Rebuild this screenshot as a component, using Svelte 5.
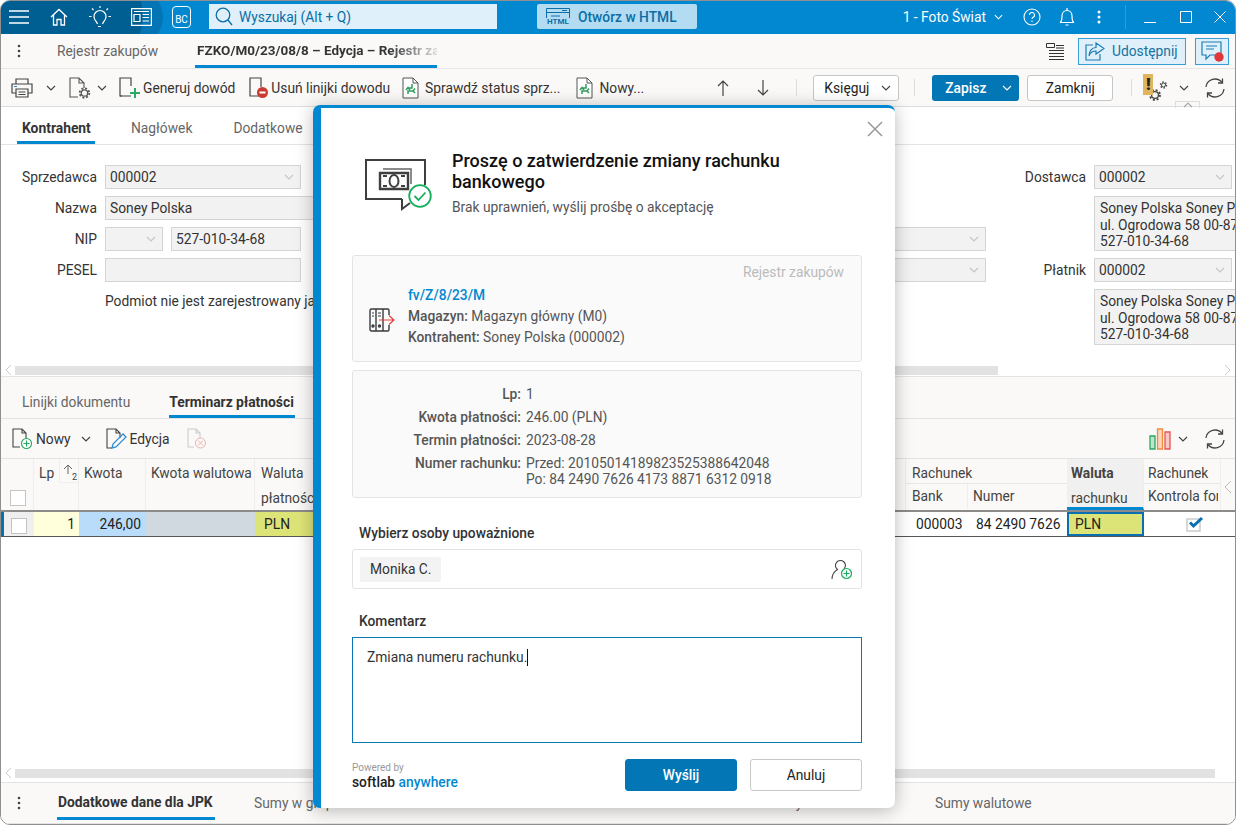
<script>
    const footTabs = ["Sumy w grupach VAT", "Rozliczenia", "Dane dodatkowe", "Koszty dodatkowe"];
    const payment = [
        { key: "Lp:", value: "1" },
        { key: "Kwota płatności:", value: "246.00 (PLN)" },
        { key: "Termin płatności:", value: "2023-08-28" },
        { key: "Numer rachunku:", value: "Przed: 20105014189823525388642048\nPo: 84 2490 7626 4173 8871 6312 0918" }
    ];
</script>

{#snippet chevron(cls = "")}
    <svg class="chev {cls}" viewBox="0 0 10 6" width="10" height="6"><path d="M1 1l4 4 4-4" fill="none" stroke="currentColor" stroke-width="1.2" /></svg>
{/snippet}

{#snippet refresh()}
    <svg width="22" height="22" viewBox="0 0 22 22" fill="none" stroke="#444" stroke-width="1.3">
        <path d="M2 10a9 9 0 0 1 16-4.500M20 12a9 9 0 0 1-16 4.500" />
        <path d="M18.500 1.500v4.500H14M3.500 20.500V16H8" />
    </svg>
{/snippet}

{#snippet docArrows()}
    <svg width="17" height="22" viewBox="0 0 17 22" fill="none">
        <path d="M1 1h10l5 5v15H1z" fill="#fff" stroke="#555" />
        <path d="M11 1v5h5" stroke="#555" />
        <path d="M10 7v4H6M4 13l2-2.500 2 2.500" stroke="#2e9e5b" stroke-width="1.500" />
        <path d="M6 17v-3h5M13 11.500l-2 2.500 2 2" stroke="#2e9e5b" stroke-width="1.500" />
    </svg>
{/snippet}

<div class="window">
    <header class="titlebar">
        <button class="tb-icon burger" aria-label="Menu">
            <svg width="20" height="14" viewBox="0 0 20 14" stroke="#fff" stroke-width="1.400"><path d="M0 1h20M0 7h20M0 13h20" /></svg>
        </button>
        <svg class="tb-home" width="18" height="18" viewBox="0 0 18 18" fill="none" stroke="#fff" stroke-width="1.300"><path d="M1 9l8-7.500L17 9M3.500 7v10H7v-5.500h4V17h3.500V7" /></svg>
        <svg class="tb-bulb" width="22" height="24" viewBox="0 0 22 24" fill="none" stroke="#fff" stroke-width="1.200">
            <path d="M8.500 19c-1-3-3.500-3.500-3.500-7.500a6 6 0 0 1 12 0c0 4-2.500 4.500-3.500 7.500M9 21.500h3" />
            <path d="M11 1v2M3 3.500l1.500 1.500M19 3.500L17.500 5M0 11.500h2.500M19.500 11.500H22" />
        </svg>
        <svg class="tb-news" width="21" height="18" viewBox="0 0 21 18" fill="none" stroke="#fff" stroke-width="1.200">
            <path d="M.6.6h19.800v16.800H.6z" /><path d="M3 3.500h15M3 6.500h6v7H3zM11.500 6.500H18M11.500 9.500H18M11.500 13H18" />
        </svg>
        <div class="bc">BC</div>
        <div class="search">
            <svg width="18" height="19" viewBox="0 0 18 19" fill="none" stroke="#0b6ea6" stroke-width="1.300"><circle cx="8" cy="8" r="6.800" /><path d="M13 13l4 5" /></svg>
            <span>Wyszukaj (Alt + Q)</span>
        </div>
        <button class="html-btn">
            <span class="html-ico">
                <svg width="24" height="13" viewBox="0 0 24 13" fill="none" stroke="#0b6ea6"><path d="M.5 12V.5h23V12M.5 4.500h23M16 2.500h5M5 8h9" /></svg>
                <b>HTML</b>
            </span>
            Otwórz w HTML
        </button>
        <div class="tb-right">
            <span class="company">1 - Foto Świat</span>
            {@render chevron("white company-chev")}
            <svg class="help" width="18" height="18" viewBox="0 0 18 18" fill="none" stroke="#fff" stroke-width="1.100"><circle cx="9" cy="9" r="8" /><path d="M6.500 7a2.500 2.500 0 1 1 3.500 2.300c-.7.400-1 .8-1 1.700M9 12.500v1.500" /></svg>
            <svg class="bell" width="16" height="20" viewBox="0 0 16 20" fill="none" stroke="#fff" stroke-width="1.200"><path d="M1 15.500c2-1 2-3 2-6.500 0-3 2-5.500 5-5.500s5 2.500 5 5.500c0 3.500 0 5.500 2 6.500zM8 1v2.500M6.500 18h3" /></svg>
            <svg class="dots" width="4" height="14" viewBox="0 0 4 14" fill="#fff"><circle cx="2" cy="2" r="1.500" /><circle cx="2" cy="7" r="1.500" /><circle cx="2" cy="12" r="1.500" /></svg>
            <span class="tb-sep"></span>
            <svg class="win w-min" width="12" height="12" viewBox="0 0 12 12" stroke="#fff"><path d="M0 11.500h12" /></svg>
            <svg class="win w-max" width="12" height="12" viewBox="0 0 12 12" fill="none" stroke="#fff"><path d="M.5.500h11v11H.5z" /></svg>
            <svg class="win w-close" width="12" height="12" viewBox="0 0 12 12" stroke="#fff"><path d="M.5.500l11 11M11.500.500l-11 11" /></svg>
        </div>
    </header>

    <nav class="tabsbar">
        <svg class="vdots" width="4" height="14" viewBox="0 0 4 14" fill="#444"><circle cx="2" cy="2" r="1.300" /><circle cx="2" cy="7" r="1.300" /><circle cx="2" cy="12" r="1.300" /></svg>
        <span class="tab-plain">Rejestr zakupów</span>
        <span class="tab-active">FZKO/M0/23/08/8 – Edycja – Rejestr zakupów</span>
        <div class="tabs-right">
            <svg width="19" height="17" viewBox="0 0 19 17" fill="none" stroke="#333"><path d="M.5.500h8v4h-8zM3 7.500h15M3 10.500h15M3 13.500h15M3 16.500h15M10 2.500h8M10 5h8" /></svg>
            <button class="share">
                <svg width="20" height="19" viewBox="0 0 20 19" fill="none" stroke="#1a7db5" stroke-width="1.200"><path d="M8 3H1v15h14v-6" /><path d="M11 1l8 5.500-8 5.500V9C7 9 5 11 4 14c0-5 3-8.500 7-8.500z" /></svg>
                Udostępnij
            </button>
            <button class="chat" aria-label="Komunikaty">
                <svg width="24" height="22" viewBox="0 0 24 22"><path d="M1 1h19v13H9l-4 4v-4H1z" fill="none" stroke="#1a7db5" stroke-width="1.200" /><path d="M5 5h11M5 8h8" stroke="#1a7db5" /><circle cx="18" cy="16" r="4.700" fill="#e0373a" /></svg>
            </button>
        </div>
    </nav>

    <div class="toolbar">
        <svg class="i-print" width="22" height="20" viewBox="0 0 22 20" fill="none" stroke="#444" stroke-width="1.200"><path d="M5 6V1h12v5M5 15H1V6h20v9h-4" /><path d="M5 11h12v8H5zM7.500 14h7M7.500 16.500h7" /><path d="M3 8.500h3" stroke="#1a8fd0" /></svg>
        {@render chevron("c-print")}
        <svg class="i-docgear" width="22" height="22" viewBox="0 0 22 22" fill="none" stroke="#555" stroke-width="1.100"><path d="M9 20H1V1h9l5 5v5M10 1v5h5" /><circle cx="15.500" cy="16" r="3.200" stroke-width="1.300" /><circle cx="15.500" cy="16" r="4.800" stroke-dasharray="2 1.770" stroke-width="1.700" /></svg>
        {@render chevron("c-docgear")}
        <span class="tool gen">
            <svg width="22" height="22" viewBox="0 0 22 22" fill="none"><path d="M12 19H1V1h11v8" stroke="#444" stroke-width="1.200" /><path d="M1 19h2" stroke="#444" /><path d="M16 11v10M11 16h10" stroke="#2ea866" stroke-width="2" /></svg>
            Generuj dowód
        </span>
        <span class="tool del">
            <svg width="20" height="22" viewBox="0 0 20 22" fill="none"><path d="M10 19H1V1h11v9" stroke="#444" stroke-width="1.200" /><circle cx="13.500" cy="15.500" r="5.500" fill="#c93a32" /><path d="M10.500 15.500h6" stroke="#fff" stroke-width="2" /></svg>
            Usuń linijki dowodu
        </span>
        <span class="tool chk">{@render docArrows()} Sprawdź status sprz...</span>
        <span class="tool nowy">{@render docArrows()} Nowy...</span>
        <svg class="arrow a-up" width="12" height="16" viewBox="0 0 12 16" fill="none" stroke="#444" stroke-width="1.200"><path d="M6 16V1M1 6l5-5 5 5" /></svg>
        <svg class="arrow a-down" width="12" height="16" viewBox="0 0 12 16" fill="none" stroke="#444" stroke-width="1.200"><path d="M6 0v15M1 10l5 5 5-5" /></svg>
        <span class="sep s1"></span>
        <div class="ksieguj">Księguj {@render chevron()}</div>
        <span class="sep s2"></span>
        <div class="zapisz"><span>Zapisz</span>{@render chevron("white")}</div>
        <button class="zamknij">Zamknij</button>
        <span class="sep s3"></span>
        <div class="warn-gear">
            <span class="warn">!</span>
            <svg width="20" height="22" viewBox="0 0 20 22" fill="none" stroke="#444"><circle cx="7" cy="15" r="3.400" stroke-width="1.300" /><circle cx="7" cy="15" r="5" stroke-dasharray="2 1.930" stroke-width="1.800" /><circle cx="15.500" cy="5" r="2" /><circle cx="15.500" cy="5" r="3" stroke-dasharray="1.400 1.740" stroke-width="1.500" /></svg>
        </div>
        {@render chevron("c-warn")}
        <span class="tool-refresh">{@render refresh()}</span>
    </div>

    <div class="doc-tabs">
        <span class="dt active">Kontrahent</span>
        <span class="dt n">Nagłówek</span>
        <span class="dt d">Dodatkowe</span>
        <span class="collapse">{@render chevron("up")}</span>
    </div>

    <section class="form">
        <label>Sprzedawca</label>
        <div class="field sel w196">000002 {@render chevron()}</div>
        <label class="lr">Dostawca</label>
        <div class="field sel w138">000002 {@render chevron()}</div>

        <label>Nazwa</label>
        <div class="field span2">Soney Polska</div>
        <div class="addr rows2">Soney Polska Soney Polska<br />ul. Ogrodowa 58 00-876<br />527-010-34-68</div>

        <label>NIP</label>
        <div class="nip">
            <div class="field sel nip-a">{@render chevron()}</div>
            <div class="field nip-b">527-010-34-68</div>
        </div>
        <div class="field sel mid">{@render chevron()}</div>

        <label>PESEL</label>
        <div class="field w196"></div>
        <div class="field sel mid">{@render chevron()}</div>
        <label class="lr">Płatnik</label>
        <div class="field sel w138">000002 {@render chevron()}</div>

        <div class="podmiot">Podmiot nie jest zarejestrowany jako podatnik VAT</div>
        <div class="addr last">Soney Polska Soney Polska<br />ul. Ogrodowa 58 00-876<br />527-010-34-68</div>
    </section>

    <div class="hscroll top">
        <svg class="sa" width="7" height="12" viewBox="0 0 7 12" fill="none" stroke="#ccc"><path d="M6 1L1 6l5 5" /></svg>
        <span class="thumb"></span>
        <svg class="sa" width="7" height="12" viewBox="0 0 7 12" fill="none" stroke="#ccc"><path d="M1 1l5 5-5 5" /></svg>
    </div>

    <div class="sub-tabs">
        <span class="st">Linijki dokumentu</span>
        <span class="st active">Terminarz płatności</span>
    </div>

    <div class="grid-tools">
        <svg width="21" height="22" viewBox="0 0 21 22" fill="none"><path d="M8 19H1V1h9l4 4v6M10 1v4h4" stroke="#444" stroke-width="1.100" /><circle cx="14.500" cy="15.500" r="5" fill="#fff" stroke="#22a85c" stroke-width="1.100" /><path d="M14.500 12.500v6M11.500 15.500h6" stroke="#22a85c" stroke-width="1.100" /></svg>
        <span class="gt-nowy">Nowy</span>
        {@render chevron("c-nowy")}
        <svg class="gt-edit" width="21" height="22" viewBox="0 0 21 22" fill="none"><path d="M6 20H1V1h9l4 4v5M10 1v4h4" stroke="#444" stroke-width="1.100" /><path d="M6 20l1-4L17 6l3 3L10 19z" stroke="#2f8fd0" stroke-width="1.300" /></svg>
        <span class="gt-edit-t">Edycja</span>
        <svg class="gt-x" width="20" height="22" viewBox="0 0 20 22" fill="none"><path d="M7 19H1V1h8l4 4v5M9 1v4h4" stroke="#ccc" stroke-width="1.100" /><circle cx="13.500" cy="15" r="5" stroke="#eeb0ae" /><path d="M11 12.500l5 5M16 12.500l-5 5" stroke="#eeb0ae" /></svg>
        <div class="gt-right">
            <svg width="22" height="22" viewBox="0 0 22 22" fill="none" stroke-width="1.300"><path d="M1 8h5v13H1z" stroke="#28a860" fill="#bfe5cd" /><path d="M8.500 1h5v20h-5z" stroke="#ef8b3e" fill="#f9d6ba" /><path d="M16 4h5v17h-5z" stroke="#e5534f" fill="#f7c8c6" /></svg>
            {@render chevron("c-chart")}
            {@render refresh()}
        </div>
    </div>

    <section class="table">
        <div class="thead">
            <div class="th c-check"><span class="box"></span></div>
            <div class="th c-lp">Lp <span class="sort"><svg width="12" height="10" viewBox="0 0 12 10" fill="none" stroke="#666"><path d="M5 10V1M1 5l4-4 4 4" /></svg><i>2</i></span></div>
            <div class="th c-kw">Kwota</div>
            <div class="th c-kww">Kwota walutowa</div>
            <div class="th c-wal">Waluta<br />płatności</div>
            <div class="th c-mid"></div>
            <div class="th-group">
                <div class="gt">Rachunek</div>
                <div class="gsub"><span class="c-bank">Bank</span><span class="c-num">Numer</span></div>
            </div>
            <div class="th c-wr">Waluta<br /><span>rachunku</span></div>
            <div class="th-group c-kf">
                <div class="gt">Rachunek</div>
                <div class="gsub"><span>Kontrola form</span></div>
            </div>
            <div class="th c-end">
                <svg width="8" height="14" viewBox="0 0 8 14" fill="none" stroke="#bbb"><path d="M7 1L1 7l6 6" /></svg>
            </div>
        </div>
        <div class="trow">
            <div class="td c-check sel"><span class="box"></span></div>
            <div class="td c-lp right lp">1</div>
            <div class="td c-kw right kw">246,00</div>
            <div class="td c-kww gray"></div>
            <div class="td c-wal yellow">PLN</div>
            <div class="td c-mid"></div>
            <div class="td c-bank2">000003</div>
            <div class="td c-num2">84 2490 7626</div>
            <div class="td c-wr yellow focus">PLN</div>
            <div class="td c-kf tick">
                <svg width="18" height="16" viewBox="0 0 18 16" fill="none"><path d="M1 3h13v12H1z" fill="#fff" stroke="#ccc" stroke-width="1.500" /><path d="M4 6.500l3.500 3.500L16 2" stroke="#0a6fb0" stroke-width="3" /></svg>
            </div>
            <div class="td c-end"></div>
        </div>
    </section>

    <div class="hscroll bottom">
        <svg class="sa" width="7" height="12" viewBox="0 0 7 12" fill="none" stroke="#ccc"><path d="M6 1L1 6l5 5" /></svg>
        <span class="thumb"></span>
    </div>

    <footer class="foot-tabs">
        <svg class="vdots" width="4" height="14" viewBox="0 0 4 14" fill="#444"><circle cx="2" cy="2" r="1.300" /><circle cx="2" cy="7" r="1.300" /><circle cx="2" cy="12" r="1.300" /></svg>
        <span class="ft active">Dodatkowe dane dla JPK</span>
        {#each footTabs as t}
            <span class="ft">{t}</span>
        {/each}
        <span class="ft last">Sumy walutowe</span>
    </footer>

    <div class="modal">
        <button class="close" aria-label="Zamknij">
            <svg width="16" height="16" viewBox="0 0 16 16" stroke="#999" stroke-width="1.500"><path d="M1 1l14 14M15 1L1 15" /></svg>
        </button>
        <div class="m-head">
            <svg width="68" height="52" viewBox="0 0 68 52" fill="none">
                <path d="M60 26V1H1v39h36" stroke="#3f3f3f" stroke-width="2" />
                <path d="M37 40v10l8-6" stroke="#3f3f3f" stroke-width="2" />
                <path d="M18 10h28v15" stroke="#666" stroke-width="1.500" />
                <path d="M15 14h28v16H15z" stroke="#3f3f3f" stroke-width="2.400" />
                <ellipse cx="29" cy="22" rx="4.500" ry="6" stroke="#3f3f3f" stroke-width="2" />
                <path d="M18 17h4M36 17h4M18 27h4M36 27h4" stroke="#3f3f3f" stroke-width="2" />
                <circle cx="55" cy="37" r="10.800" fill="#fff" stroke="#17ae5c" stroke-width="1.800" />
                <path d="M49.500 37l4 4 7-7.500" stroke="#17ae5c" stroke-width="1.800" />
            </svg>
            <div class="m-titles">
                <h2>Proszę o zatwierdzenie zmiany rachunku bankowego</h2>
                <p>Brak uprawnień, wyślij prośbę o akceptację</p>
            </div>
        </div>

        <div class="card doc">
            <span class="reg">Rejestr zakupów</span>
            <div class="doc-row">
                <svg width="26" height="24" viewBox="0 0 26 24" fill="none" stroke="#3a3a3a" stroke-width="1.400">
                    <path d="M1 2.500A1.500 1.500 0 0 1 2.500 1H7v22H2.500A1.500 1.500 0 0 1 1 21.500zM7 1h7v22H7M14 1h4.500a1.500 1.500 0 0 1 1.500 1.500V7M20 17v4.500a1.500 1.500 0 0 1-1.500 1.500H14" />
                    <path d="M3 5h2M3 8h2M9 5h3M9 8h3" stroke-width="1.100" />
                    <circle cx="4" cy="18" r="1" /><circle cx="10.500" cy="18" r="1" />
                    <path d="M10 12h15M20 7.500l5 4.500-5 4.500" stroke="#e8403c" stroke-width="1.200" />
                </svg>
                <div class="doc-text">
                    <a href="#doc">fv/Z/8/23/M</a>
                    <div><b>Magazyn:</b> Magazyn główny (M0)</div>
                    <div><b>Kontrahent:</b> Soney Polska (000002)</div>
                </div>
            </div>
        </div>

        <div class="card kv">
            {#each payment as row}
                <b>{row.key}</b>
                <span>{row.value}</span>
            {/each}
        </div>

        <div class="m-label first">Wybierz osoby upoważnione</div>
        <div class="people">
            <span class="chip">Monika C.</span>
            <svg width="22" height="22" viewBox="0 0 22 22" fill="none">
                <path d="M1 21c0-5 3-8 5.500-9.500A5 5 0 1 1 13 11" stroke="#444" stroke-width="1.100" />
                <circle cx="15.500" cy="15.500" r="5" stroke="#17ae5c" stroke-width="1.200" />
                <path d="M15.500 12.500v6M12.500 15.500h6" stroke="#17ae5c" stroke-width="1.200" />
            </svg>
        </div>

        <div class="m-label second">Komentarz</div>
        <div class="comment">Zmiana numeru rachunku.<span class="caret"></span></div>

        <div class="m-foot">
            <div class="brand">
                <small>Powered by</small>
                <div>softlab <em>anywhere</em></div>
            </div>
            <button class="btn primary">Wyślij</button>
            <button class="btn">Anuluj</button>
        </div>
    </div>
</div>

<style>
    :global(body) {
        margin: 0;
        background: #fff;
    }

    .window {
        position: relative;
        width: 1236px;
        height: 825px;
        box-sizing: border-box;
        border: 1px solid #8f8f8f;
        border-radius: 10px;
        overflow: hidden;
        background: #fff;
        display: flex;
        flex-direction: column;
        font-family: Roboto, "Liberation Sans", sans-serif;
        font-size: 13.8px;
        color: #333;
    }

    button {
        font: inherit;
        cursor: pointer;
    }

    svg {
        display: block;
        flex: none;
    }

    .chev {
        color: #444;
    }

    :global(.white) {
        color: #fff !important;
    }

    /* title bar */
    .titlebar {
        position: relative;
        flex: none;
        height: 33px;
        box-sizing: border-box;
        padding-bottom: 2px;
        display: flex;
        align-items: center;
        background: #0288d1;
    }

    .titlebar::before {
        content: "";
        position: absolute;
        left: -60px;
        top: -40px;
        width: 222px;
        height: 112px;
        border-radius: 50%;
        background: #0475b4;
    }

    .titlebar::after {
        content: "";
        position: absolute;
        left: -80px;
        top: -60px;
        width: 222px;
        height: 150px;
        border-radius: 50%;
        background: #005f92;
    }

    .titlebar > * {
        position: relative;
        z-index: 1;
    }

    .burger {
        margin-left: 8px;
        padding: 0;
        border: 0;
        background: none;
    }

    .tb-home {
        margin-left: 21px;
    }

    .tb-bulb {
        margin-left: 21px;
    }

    .tb-news {
        margin-left: 20px;
    }

    .bc {
        margin-left: 20px;
        width: 19px;
        height: 22px;
        border: 1px solid #fff;
        border-radius: 4px;
        box-sizing: border-box;
        color: #fff;
        font-size: 10px;
        display: flex;
        align-items: flex-end;
        justify-content: center;
        padding-bottom: 2px;
    }

    .search {
        margin-left: 18px;
        width: 288px;
        height: 25px;
        box-sizing: border-box;
        padding-left: 6px;
        background: #dff0fa;
        color: #0b6ea6;
        display: flex;
        align-items: center;
        gap: 6px;
    }

    .html-btn {
        margin-left: 40px;
        width: 160px;
        height: 25px;
        border: 0;
        border-radius: 2px;
        padding: 0 0 0 9px;
        background: #b3dcf3;
        color: #0b6ea6;
        font-weight: 500;
        display: flex;
        align-items: center;
        gap: 8px;
    }

    .html-ico {
        display: flex;
        flex-direction: column;
        align-items: center;
        width: 24px;
    }

    .html-ico b {
        font-size: 8px;
        line-height: 8px;
        margin-top: -3px;
        background: #b3dcf3;
        padding: 0 1px;
    }

    .tb-right {
        margin-left: auto;
        display: flex;
        align-items: center;
        color: #fff;
    }

    .tb-right :global(.company-chev) {
        margin-left: 8px;
        width: 9px;
    }

    .help {
        margin-left: 20px;
    }

    .bell {
        margin-left: 18px;
    }

    .dots {
        margin-left: 22px;
    }

    .tb-sep {
        width: 1px;
        height: 24px;
        background: #2c9cdb;
        margin: 0 18px 0 24px;
    }

    .w-min {
        margin-right: 24px;
    }

    .w-max {
        margin-right: 22px;
    }

    .w-close {
        margin-right: 9px;
    }

    /* document tabs */
    .tabsbar {
        flex: none;
        height: 34px;
        background: #faf9f8;
        border-bottom: 1px solid #e6e6e6;
        display: flex;
        align-items: center;
        position: relative;
    }

    .vdots {
        margin-left: 16px;
    }

    .tab-plain {
        margin-left: 36px;
        color: #666;
    }

    .tab-active {
        margin-left: 37px;
        width: 242px;
        align-self: stretch;
        box-sizing: border-box;
        padding-left: 2px;
        line-height: 33px;
        border-bottom: 3px solid #0288d1;
        font-weight: 700;
        font-size: 13.500px;
        white-space: nowrap;
        overflow: hidden;
        color: transparent;
        background: linear-gradient(90deg, #333 80%, #ddd 100%);
        -webkit-background-clip: text;
        background-clip: text;
    }

    .tabs-right {
        margin-left: auto;
        margin-right: 6px;
        display: flex;
        align-items: center;
    }

    .share {
        margin-left: 13px;
        width: 108px;
        height: 27px;
        padding: 0 0 0 6px;
        border: 1px solid #3a9ed6;
        background: #e0f0fa;
        color: #15739f;
        display: flex;
        align-items: center;
        gap: 7px;
    }

    .chat {
        margin-left: 9px;
        width: 34px;
        height: 27px;
        padding: 2px 0 0 5px;
        border: 1px solid #3a9ed6;
        background: #e0f0fa;
    }

    /* toolbar */
    .toolbar {
        position: relative;
        flex: none;
        height: 37px;
        background: #faf9f8;
        border-bottom: 1px solid #dcdcdc;
        display: flex;
        align-items: center;
    }

    .i-print {
        margin-left: 10px;
    }

    .toolbar :global(.c-print) {
        margin-left: 13px;
    }

    .i-docgear {
        margin-left: 13px;
    }

    .toolbar :global(.c-docgear) {
        margin-left: 6px;
    }

    .tool {
        display: inline-flex;
        align-items: center;
        gap: 2px;
        white-space: nowrap;
    }

    .gen {
        margin-left: 12px;
    }

    .del {
        margin-left: 14px;
    }

    .chk {
        margin-left: 12px;
        gap: 6px;
    }

    .nowy {
        margin-left: 16px;
        gap: 6px;
    }

    .a-up {
        margin-left: 73px;
    }

    .a-down {
        margin-left: 28px;
    }

    .sep {
        width: 1px;
        height: 17px;
        background: #ddd;
    }

    .s1 {
        margin-left: 27px;
    }

    .ksieguj {
        margin-left: 16px;
        width: 86px;
        height: 26px;
        box-sizing: border-box;
        padding: 0 7px 0 10px;
        background: #fff;
        border: 1px solid #c6c6c6;
        border-radius: 3px;
        display: flex;
        align-items: center;
        justify-content: space-between;
        color: #222;
    }

    .s2 {
        margin-left: 15px;
    }

    .zapisz {
        margin-left: 17px;
        width: 87px;
        height: 26px;
        box-sizing: border-box;
        padding: 0 7px 0 13px;
        background: #0376b5;
        border-radius: 3px;
        color: #fff;
        font-weight: 500;
        display: flex;
        align-items: center;
        justify-content: space-between;
    }

    .zamknij {
        margin-left: 8px;
        width: 86px;
        height: 26px;
        padding: 0;
        background: #fff;
        border: 1px solid #c6c6c6;
        border-radius: 3px;
        color: #222;
    }

    .s3 {
        margin-left: 18px;
    }

    .warn-gear {
        position: relative;
        margin-left: 11px;
        width: 25px;
        height: 28px;
        display: flex;
        align-items: flex-end;
        justify-content: flex-end;
    }

    .warn {
        position: absolute;
        left: 0;
        top: 0;
        width: 10px;
        height: 21px;
        background: #e0b55e;
        color: #222;
        font-weight: 900;
        font-size: 17px;
        line-height: 20px;
        text-align: center;
    }

    .toolbar :global(.c-warn) {
        margin-left: 11px;
    }

    .tool-refresh {
        margin-left: 15px;
    }

    /* form tabs */
    .doc-tabs {
        position: relative;
        flex: none;
        height: 38px;
        box-sizing: border-box;
        background: #fff;
        border-bottom: 1px solid #e3e3e3;
        display: flex;
    }

    .dt {
        position: relative;
        line-height: 43px;
        color: #666;
        white-space: nowrap;
    }

    .dt.active {
        margin-left: 16px;
        width: 78px;
        box-sizing: border-box;
        padding-left: 5px;
        font-weight: 700;
        font-size: 13.850px;
        color: #333;
        height: 37px;
        border-bottom: 3px solid #0288d1;
    }

    .dt.n {
        margin-left: 36px;
    }

    .dt.d {
        margin-left: 41px;
    }

    .collapse {
        position: absolute;
        right: 35px;
        top: -6px;
        width: 23px;
        height: 6px;
        border: 1px solid #ddd;
        border-bottom: 0;
        color: #aaa;
        display: flex;
        justify-content: center;
    }

    .collapse :global(.up) {
        transform: rotate(180deg);
        color: #aaa;
    }

    /* form */
    .form {
        flex: none;
        height: 219px;
        box-sizing: border-box;
        padding-top: 20px;
        display: grid;
        grid-template-columns: 97px 196px 385px 286px 94px 146px;
        grid-template-rows: 24px 24px 24px 24px 56px;
        gap: 7px;
        overflow: hidden;
    }

    label {
        grid-column: 1;
        padding-right: 1px;
        text-align: right;
        line-height: 24px;
        color: #333;
    }

    label.lr {
        grid-column: 5;
    }

    .field {
        grid-column: 2;
        height: 24px;
        box-sizing: border-box;
        background: #f2f2f2;
        border: 1px solid #d4d4d4;
        padding: 0 4px;
        line-height: 22px;
        color: #333;
        white-space: nowrap;
    }

    .sel {
        display: flex;
        align-items: center;
        justify-content: space-between;
        padding-right: 6px;
    }

    .sel :global(.chev) {
        color: #c6c6c6;
        margin-left: auto;
    }

    .w196 {
        width: 196px;
    }

    .field.w138 {
        grid-column: 6;
        width: 138px;
    }

    .field.span2 {
        grid-column: 2 / span 2;
    }

    .field.mid {
        grid-column: 4;
    }

    .nip {
        grid-column: 2;
        display: flex;
        gap: 8px;
    }

    .nip-a {
        width: 58px;
    }

    .nip-b {
        width: 130px;
    }

    .addr {
        background: #f2f2f2;
        border: 1px solid #d4d4d4;
        box-sizing: border-box;
        width: 160px;
        padding: 3px 0 0 5px;
        line-height: 16.500px;
        white-space: nowrap;
        overflow: hidden;
    }

    .rows2 {
        grid-column: 6;
        grid-row: 2 / span 2;
    }

    .last {
        grid-column: 6;
    }

    .podmiot {
        grid-column: 2 / span 2;
        line-height: 24px;
        white-space: nowrap;
    }

    .hscroll {
        flex: none;
        height: 12px;
        display: flex;
        align-items: center;
        padding: 0 4px;
        gap: 3px;
        background: #fff;
    }

    .hscroll.top {
        justify-content: flex-start;
    }

    .hscroll .thumb {
        height: 9px;
        background: #e2e2e2;
    }

    .top .thumb {
        width: 985px;
        margin-right: 223px;
    }

    .bottom {
        margin-top: auto;
    }

    .bottom .thumb {
        width: 1200px;
    }

    /* sub tabs */
    .sub-tabs {
        flex: none;
        height: 43px;
        box-sizing: border-box;
        background: #faf9f8;
        border-top: 1px solid #e3e3e3;
        border-bottom: 1px solid #e3e3e3;
        display: flex;
        padding-left: 21px;
    }

    .st {
        line-height: 50px;
        color: #666;
    }

    .st.active {
        margin-left: 39px;
        width: 126px;
        height: 41px;
        box-sizing: border-box;
        border-bottom: 3px solid #0288d1;
        font-weight: 700;
        font-size: 13.850px;
        color: #333;
    }

    .grid-tools {
        flex: none;
        height: 40px;
        box-sizing: border-box;
        background: #faf9f8;
        border-bottom: 1px solid #e3e3e3;
        display: flex;
        align-items: center;
        padding: 1px 0 0 11px;
    }

    .gt-nowy {
        margin-left: 3px;
    }

    .grid-tools :global(.c-nowy) {
        margin-left: 10px;
    }

    .gt-edit {
        margin-left: 15px;
    }

    .gt-edit-t {
        margin-left: 3px;
    }

    .gt-x {
        margin-left: 17px;
    }

    .gt-right {
        margin-left: auto;
        margin-right: 9px;
        display: flex;
        align-items: center;
    }

    .gt-right :global(.c-chart) {
        margin: 0 16px 0 7px;
    }

    /* table */
    .table {
        flex: none;
    }

    .thead,
    .trow {
        display: flex;
    }

    .thead {
        height: 51px;
        background: #faf9f8;
        border-bottom: 2px solid #8b8b8b;
    }

    .trow {
        height: 24px;
        background: #fff;
        border-bottom: 1px solid #555;
        line-height: 24px;
    }

    .th {
        box-sizing: border-box;
        border-right: 1px solid #eee;
        padding: 2px 5px 0;
        line-height: 25px;
        color: #444;
        white-space: nowrap;
        overflow: hidden;
    }

    .td {
        box-sizing: border-box;
        padding: 0 5px;
        white-space: nowrap;
        color: #222;
    }

    .c-check {
        width: 33px;
        flex: none;
    }

    .th.c-check {
        display: flex;
        align-items: flex-end;
        padding: 0 0 4px 9px;
    }

    .box {
        display: block;
        box-sizing: border-box;
        width: 16px;
        height: 16px;
        background: #fff;
        border: 1px solid #c4c4c4;
    }

    .td.sel {
        justify-content: flex-start;
        padding: 4px 0 0 7px;
        background: #efefef;
        border-left: 3px solid #0a6fb0;
    }

    .c-lp {
        width: 45px;
        flex: none;
    }

    .th.c-lp {
        position: relative;
    }

    .td.lp {
        padding-right: 4px;
    }

    .sort {
        position: absolute;
        right: 0;
        top: 0;
        width: 19px;
        height: 24px;
        border-left: 1px solid #eee;
        border-bottom: 1px solid #eee;
        padding: 5px 0 0 3px;
        box-sizing: border-box;
    }

    .sort i {
        position: absolute;
        right: 1px;
        top: 6px;
        font-style: normal;
        font-size: 9px;
    }

    .c-kw {
        width: 67px;
        flex: none;
    }

    .c-kww {
        width: 109px;
        flex: none;
    }

    .c-wal {
        width: 80px;
        flex: none;
    }

    .th.c-wal {
        padding-left: 6px;
    }

    .c-mid {
        width: 571px;
        flex: none;
    }

    .right {
        text-align: right;
    }

    .td.kw {
        padding-right: 5px;
    }

    .lp {
        background: #ffffdc;
    }

    .kw {
        background: #b8dcfa;
    }

    .gray {
        background: #d0d8e0;
    }

    .yellow {
        background: #dde477;
    }

    .td.c-wal {
        padding-left: 9px;
    }

    .th-group {
        display: flex;
        flex-direction: column;
        color: #444;
        width: 161px;
        flex: none;
        box-sizing: border-box;
    }

    .gt {
        height: 25px;
        line-height: 29px;
        padding-left: 6px;
        border-bottom: 1px solid #e8e8e8;
        box-sizing: border-box;
    }

    .gsub {
        display: flex;
        line-height: 25px;
        white-space: nowrap;
        overflow: hidden;
    }

    .gsub span {
        padding-left: 6px;
        box-sizing: border-box;
    }

    .c-bank {
        width: 62px;
        border-right: 1px solid #eee;
        flex: none;
    }

    .gsub .c-num {
        width: 99px;
        padding-left: 5px;
        flex: none;
    }

    .c-bank2 {
        width: 62px;
        flex: none;
        padding-left: 10px;
    }

    .td.c-num2 {
        width: 99px;
        flex: none;
        padding-left: 8px;
    }

    .c-wr {
        width: 77px;
        flex: none;
    }

    .th.c-wr {
        padding-left: 4px;
        background: #f0f0f0;
        border-bottom: 3px solid #0288d1;
        font-weight: 700;
    }

    .th.c-wr span {
        font-weight: 400;
    }

    .td.focus {
        border: 2px solid #0a6fb0;
        line-height: 20px;
        padding-left: 6px;
    }

    .th-group.c-kf,
    .c-kf {
        width: 76px;
        flex: none;
    }

    .c-kf .gt {
        padding-left: 4px;
    }

    .c-kf .gsub {
        width: 74px;
    }

    .c-kf .gsub span {
        padding-left: 4px;
    }

    .tick {
        display: flex;
        align-items: center;
        padding-left: 42px;
    }

    .c-end {
        width: 16px;
        flex: none;
    }

    .th.c-end {
        border: 0;
        padding: 21px 0 0 3px;
        border-left: 1px solid #eee;
    }

    /* bottom tabs */
    .foot-tabs {
        flex: none;
        height: 42px;
        box-sizing: border-box;
        margin-top: 3px;
        background: #faf9f8;
        border-top: 1px solid #e3e3e3;
        border-bottom: 1px solid #e3e3e3;
        display: flex;
        align-items: center;
        white-space: nowrap;
        overflow: hidden;
    }

    .foot-tabs .vdots {
        margin-left: 16px;
    }

    .ft {
        color: #666;
        margin-left: 39px;
        width: 130px;
    }

    .ft.active {
        margin-left: 36px;
        width: 158px;
        height: 37px;
        align-self: flex-start;
        box-sizing: border-box;
        padding: 0 0 0 1px;
        line-height: 39px;
        border-bottom: 3px solid #0288d1;
        font-weight: 700;
        font-size: 13.850px;
        color: #333;
    }

    .ft.last {
        margin-left: 0;
        position: absolute;
        left: 934px;
        width: auto;
    }

    /* modal */
    .modal {
        position: absolute;
        left: 312px;
        top: 104px;
        width: 582px;
        height: 703px;
        box-sizing: border-box;
        background: #fff;
        border-left: 8px solid #0288d1;
        border-top: 3px solid #0288d1;
        border-radius: 7px;
        box-shadow: 0 2px 18px rgba(0, 0, 0, 0.28);
        padding: 43px 33px 0 31px;
        display: flex;
        flex-direction: column;
    }

    .close {
        position: absolute;
        right: 12px;
        top: 13px;
        padding: 0;
        border: 0;
        background: none;
    }

    .m-head {
        display: flex;
        gap: 19px;
        height: 104px;
        padding: 7px 0 0 13px;
        box-sizing: border-box;
    }

    .m-head svg {
        margin-top: 1px;
    }

    .m-titles {
        width: 340px;
        margin-top: -8px;
    }

    h2 {
        margin: 0;
        font-size: 18px;
        line-height: 21px;
        font-weight: 500;
        color: #111;
    }

    .m-titles p {
        margin: 5px 0 0;
        color: #555;
        line-height: 20px;
    }

    .card {
        box-sizing: border-box;
        background: #fafafa;
        border: 1px solid #e4e4e4;
        border-radius: 3px;
        width: 510px;
        flex: none;
    }

    .doc {
        position: relative;
        height: 107px;
    }

    .reg {
        position: absolute;
        right: 17px;
        top: 8px;
        color: #bbb;
    }

    .doc-row {
        display: flex;
        align-items: center;
        gap: 13px;
        padding: 29px 0 0 16px;
    }

    .doc-row svg {
        margin-top: 6px;
    }

    .doc-text {
        line-height: 21px;
        color: #555;
    }

    .doc-text a {
        display: block;
        color: #0288d1;
        font-weight: 500;
        text-decoration: none;
    }

    .doc-text b {
        font-weight: 500;
    }

    .kv {
        margin-top: 8px;
        height: 128px;
        padding-top: 15px;
        display: grid;
        grid-template-columns: 168px 1fr;
        grid-auto-rows: min-content;
        column-gap: 5px;
        row-gap: 7px;
        line-height: 16px;
        color: #555;
    }

    .kv b {
        text-align: right;
        font-weight: 500;
    }

    .kv span {
        white-space: pre-line;
    }

    .m-label {
        padding-left: 7px;
        line-height: 20px;
        font-weight: 500;
        color: #333;
    }

    .first {
        margin-top: 25px;
    }

    .second {
        margin-top: 22px;
    }

    .people {
        margin-top: 6px;
        width: 510px;
        height: 40px;
        box-sizing: border-box;
        border: 1px solid #e3e3e3;
        border-radius: 3px;
        padding: 0 8px 0 7px;
        display: flex;
        align-items: center;
        justify-content: space-between;
    }

    .chip {
        width: 81px;
        height: 25px;
        box-sizing: border-box;
        padding-left: 10px;
        line-height: 25px;
        background: #f3f3f3;
        border-radius: 2px;
    }

    .comment {
        margin-top: 6px;
        width: 510px;
        height: 106px;
        box-sizing: border-box;
        border: 1px solid #0a78b4;
        padding: 10px 14px;
        line-height: 18px;
    }

    .caret {
        display: inline-block;
        width: 1px;
        height: 17px;
        background: #111;
        vertical-align: -4px;
    }

    .m-foot {
        margin-top: 16px;
        width: 510px;
        display: flex;
        align-items: center;
        gap: 13px;
    }

    .brand {
        margin-right: auto;
        line-height: 14px;
        font-weight: 500;
        color: #222;
    }

    .brand small {
        display: block;
        font-size: 10px;
        font-weight: 400;
        color: #999;
    }

    .brand em {
        font-style: normal;
        color: #0288d1;
    }

    .btn {
        width: 112px;
        height: 32px;
        padding: 0;
        background: #fff;
        border: 1px solid #c8c8c8;
        border-radius: 3px;
        color: #222;
    }

    .btn.primary {
        background: #0376b5;
        border-color: #0376b5;
        color: #fff;
        font-weight: 500;
    }
</style>
